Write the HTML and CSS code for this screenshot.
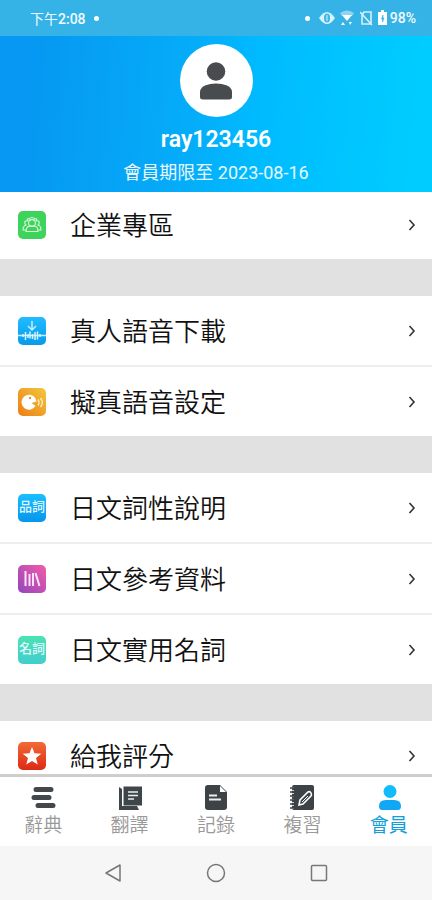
FILE: index.html
```html
<!DOCTYPE html>
<html lang="zh-Hant">
<head>
<meta charset="utf-8">
<meta name="viewport" content="width=device-width, initial-scale=1">
<title>會員</title>
<link rel="stylesheet" href="styles.css">
</head>
<body>
<div class="status">
  <div class="status-side"><span>下午<b>2:08</b></span><i class="dot"></i></div>
  <div class="status-side status-right">
    <i class="dot"></i>
    <svg class="eye" width="16" height="14" viewBox="0 0 16 14"><path d="M0 7Q4 1 8 1t8 6q-4 6-8 6T0 7z" fill="#d9f3fc"/><ellipse cx="8" cy="7" rx="3" ry="4.5" fill="#35b3e7"/><ellipse cx="8" cy="7" rx="1.2" ry="3.5" fill="#8fd5f1"/></svg>
    <svg width="14" height="16" viewBox="0 0 14 16"><path d="M0 3q7-5 14 0l-2 3H2z" fill="#8fd5f1"/><path d="M2 5h10l-5 6z" fill="#fff"/><path d="M3 12l2 3H1zM9 12h3l-2 3z" fill="#fff"/></svg>
    <svg class="sim" width="13" height="16" viewBox="0 0 13 16"><path d="M4 2h7v12H2V5zM0 2l12 13" fill="none" stroke="#d5f0fb" stroke-width="1.6"/></svg>
    <svg width="9" height="16" viewBox="0 0 9 16"><path d="M3 0h3v2h3v13H0V2h3z" fill="#fff"/><path d="M5 5L3.500 9h1v3l1.500-4H5z" fill="#35b3e7" stroke="#35b3e7" stroke-width=".6"/></svg>
    <b>98%</b>
  </div>
</div>
<header class="profile">
  <div class="avatar"><svg width="34" height="40" viewBox="0 0 34 40"><circle cx="17" cy="10.500" r="9.300" fill="#484c4f"/><path d="M1 31q0-4 5-6.500 5-2 11-2t11 2q5 2.500 5 6.500v5q0 2.500-3 2.500H4q-3 0-3-2.500z" fill="#484c4f"/></svg></div>
  <h1>ray123456</h1>
  <p>會員期限至 2023-08-16</p>
</header>
<main class="content">
  <section class="group">
    <a class="row" href="#"><svg class="icon" viewBox="0 0 28 28"><rect width="28" height="28" rx="5" fill="#3ed35b"/><g fill="none" stroke="#d8fadd" stroke-width="1.1"><circle cx="14" cy="12" r="3.4"/><path d="M10 10Q8 7 11 8q3-3 6 0 3-1 1 2M8 20.5q0-5 4-5.500h4q4 0 4 5.500zM10 10q-4-1-3 3l1 1q-3 1-3 5h3M18 10q4-1 3 3l-1 1q3 1 3 5h-3"/></g></svg><span class="label">企業專區</span><svg class="chevron" viewBox="0 0 8 12"><path d="M1.500 1L6 6l-4.500 5"/></svg></a>
  </section>
  <section class="group">
    <a class="row" href="#"><svg class="icon" viewBox="0 0 28 28"><defs><linearGradient id="g1" x2="0" y2="1"><stop stop-color="#20bcff"/><stop offset="1" stop-color="#079be9"/></linearGradient></defs><rect width="28" height="28" rx="5" fill="url(#g1)"/><path d="M14 4v8M10 9l4 4 4-4M0 18.500h28" fill="none" stroke="#c9efff" stroke-width="1.5"/><path d="M5 17v3M7.500 15v8M10 17v4M12 14.500v7M14.500 17v5M17 15v8M19.500 14.500v8M22 17v3" stroke="#d9f5ff" stroke-width="1.500"/></svg><span class="label">真人語音下載</span><svg class="chevron" viewBox="0 0 8 12"><path d="M1.500 1L6 6l-4.500 5"/></svg></a>
    <a class="row" href="#"><svg class="icon" viewBox="0 0 28 28"><defs><linearGradient id="g2" x1="1" x2="0" y2="1"><stop stop-color="#f2c83c"/><stop offset="1" stop-color="#ed7d16"/></linearGradient></defs><rect width="28" height="28" rx="5" fill="url(#g2)"/><path d="M17.500 10.500A7.500 7.500 0 1 0 17.500 18L13.500 15l5-1.500z" fill="#fff"/><circle cx="12" cy="10" r="1.200" fill="#ed9820"/><path d="M20 11.500q2 3 0 6" fill="none" stroke="#ffe9bb" stroke-width="1.5"/><path d="M22.500 10q3.500 4.500 0 9" fill="none" stroke="#ffe9bb" stroke-width="1.500"/></svg><span class="label">擬真語音設定</span><svg class="chevron" viewBox="0 0 8 12"><path d="M1.500 1L6 6l-4.500 5"/></svg></a>
  </section>
  <section class="group">
    <a class="row" href="#"><span class="icon tile blue">品詞</span><span class="label">日文詞性說明</span><svg class="chevron" viewBox="0 0 8 12"><path d="M1.500 1L6 6l-4.500 5"/></svg></a>
    <a class="row" href="#"><svg class="icon" viewBox="0 0 28 28"><defs><linearGradient id="g3" x1="1" x2="0" y2="1"><stop stop-color="#f45ba9"/><stop offset="1" stop-color="#9146bd"/></linearGradient></defs><rect width="28" height="28" rx="5" fill="url(#g3)"/><path d="M7.500 6v15M11.500 9v12M15 8v13M17.500 8l4 13" stroke="#ffe3fa" stroke-width="2"/></svg><span class="label">日文參考資料</span><svg class="chevron" viewBox="0 0 8 12"><path d="M1.500 1L6 6l-4.500 5"/></svg></a>
    <a class="row" href="#"><span class="icon tile mint">名詞</span><span class="label">日文實用名詞</span><svg class="chevron" viewBox="0 0 8 12"><path d="M1.500 1L6 6l-4.500 5"/></svg></a>
  </section>
  <section class="group">
    <a class="row" href="#"><svg class="icon" viewBox="0 0 28 28"><defs><linearGradient id="g4" x2="0" y2="1"><stop stop-color="#f26a36"/><stop offset="1" stop-color="#dc2a15"/></linearGradient></defs><rect width="28" height="28" rx="5" fill="url(#g4)"/><path d="M14 5l2.500 6.300 6.800.4-5.300 4.300 1.800 6.600-5.800-3.700-5.800 3.700L10 16l-5.300-4.300 6.800-.4z" fill="#fff"/></svg><span class="label">給我評分</span><svg class="chevron" viewBox="0 0 8 12"><path d="M1.500 1L6 6l-4.500 5"/></svg></a>
  </section>
</main>
<nav class="tabs">
  <a href="#"><svg viewBox="0 0 26 26"><path d="M6 4.500h15M4 12.500h15M8 20.500h15" stroke="#43484c" stroke-width="5" stroke-linecap="round"/></svg>辭典</a>
  <a href="#"><svg viewBox="0 0 26 26"><path d="M2 2l3 2v17h15l2 4H2z" fill="#3f464a"/><path d="M6.500 1.500H25v19H6.500z" fill="#3f464a"/><path d="M11 7h10M11 10.500h10M11 14h6" stroke="#e9edef" stroke-width="1.500"/></svg>翻譯</a>
  <a href="#"><svg viewBox="0 0 26 26"><path d="M5 0h12l7 7v15q0 3-3 3H5q-3 0-3-3V3q0-3 3-3z" fill="#3d4246"/><path d="M17 1v6h6z" fill="#fff"/><path d="M6 10.500h8M6 14.500h12" stroke="#e9edef" stroke-width="2.200"/></svg>記錄</a>
  <a href="#"><svg viewBox="0 0 26 26"><rect x="3" width="22" height="25" rx="2" fill="#3d4246"/><path d="M4 2v22" stroke="#fff" stroke-width="1.500" stroke-dasharray="1 2"/><path d="M1 3h5M1 7h5M1 11h5M1 15h5M1 19h5M1 23h5" stroke="#3d4246" stroke-width="1.500"/><path d="M10 20l1-5 8-8q2-1 3 1t0 3l-8 8z" fill="#3d4246" stroke="#fff" stroke-width="1.600"/><path d="M13 17l6-6" stroke="#fff"/></svg>複習</a>
  <a class="active" href="#"><svg viewBox="0 0 26 26"><circle cx="14" cy="6.500" r="6.500" fill="#10bcf9"/><path d="M3 21q0-6 7-6h8q7 0 7 6 0 4-3 4H6q-3 0-3-4z" fill="#10a7f4"/></svg>會員</a>
</nav>
<footer class="system">
  <button aria-label="返回"><svg viewBox="0 0 20 20"><path d="M17 2v16L3 10z"/></svg></button>
  <button aria-label="主畫面"><svg viewBox="0 0 20 20"><circle cx="10" cy="10" r="8.500"/></svg></button>
  <button aria-label="最近使用"><svg viewBox="0 0 20 20"><rect x="2.500" y="2.500" width="15" height="15" rx="1"/></svg></button>
</footer>
</body>
</html>
```
FILE: styles.css
```css
* { box-sizing: border-box; }
body {
  margin: 0;
  height: 100vh;
  display: flex;
  flex-direction: column;
  background: #fff;
  font-family: Roboto, "Noto Sans CJK TC", sans-serif;
}
a { color: inherit; text-decoration: none; }
.status {
  height: 36px;
  flex: none;
  display: flex;
  align-items: center;
  justify-content: space-between;
  padding: 0 16px 0 30px;
  background: #35b3e7;
  color: #f2fbff;
  font-size: 14px;
}
.status b { font-weight: 500; }
.status-side { display: flex; align-items: center; gap: 8px; }
.status-right { gap: 5px; }
.status-right b { margin-left: -2px; }
.eye { margin-left: 4px; }
.sim { margin-left: 1px; }
.dot { width: 5px; height: 5px; border-radius: 50%; background: #fff; }
.profile {
  height: 156px;
  flex: none;
  padding-top: 8px;
  display: flex;
  flex-direction: column;
  align-items: center;
  background: linear-gradient(95deg, #0698f2 8%, #05adf9 45%, #00bbff 60%, #00ccff 95%);
  color: #fff;
}
.avatar {
  width: 73px;
  height: 73px;
  flex: none;
  display: flex;
  align-items: center;
  justify-content: center;
  border-radius: 50%;
  background: #fff;
}
h1 { margin: 9px 0 0; font-size: 23px; line-height: 28px; font-weight: 600; }
.profile p { margin: 6px 0 0; font-size: 18px; line-height: 26px; color: #e8f8ff; }
.content { flex: 1; min-height: 0; overflow: hidden; background: #e1e1e1; }
.group { margin-bottom: 37px; background: #fff; }
.group:first-child { margin-top: -2px; }
.row {
  height: 69px;
  display: flex;
  align-items: center;
  padding: 0 16px 0 18px;
}
.row + .row { height: 71px; border-top: 2px solid #eee; }
.icon { width: 28px; height: 28px; flex: none; margin-right: 24px; }
.tile {
  border-radius: 5px;
  color: #e2f8ff;
  font-size: 13px;
  line-height: 26px;
  font-weight: 500;
  text-align: center;
  white-space: nowrap;
}
.blue { background: linear-gradient(#18bfff, #0795ed); }
.mint { background: linear-gradient(#48e4b2, #43cdce); }
.label { flex: 1; padding-bottom: 2px; font-size: 26px; line-height: 36px; font-weight: 350; font-family: "Noto Sans CJK TC", sans-serif; color: #111; }
.chevron { width: 8px; height: 12px; fill: none; stroke: #333; stroke-width: 1.6; }
.tabs {
  height: 72px;
  flex: none;
  display: flex;
  border-top: 3px solid #cecece;
  background: #fff;
  color: #999;
  font-size: 19px;
  line-height: 26px;
  font-weight: 350;
}
.tabs a { flex: 1; display: flex; flex-direction: column; align-items: center; gap: 2px; padding-top: 8px; }
.tabs svg { width: 26px; height: 26px; fill: none; }
.tabs .active { color: #129fd9; font-weight: 400; }
.system {
  height: 54px;
  flex: none;
  display: flex;
  justify-content: center;
  align-items: center;
  gap: 83px;
  background: #f6f6f6;
}
.system button { padding: 0; border: 0; background: none; display: flex; }
.system svg { width: 20px; height: 20px; fill: none; stroke: #777; stroke-width: 1.5; stroke-linejoin: round; }
```
